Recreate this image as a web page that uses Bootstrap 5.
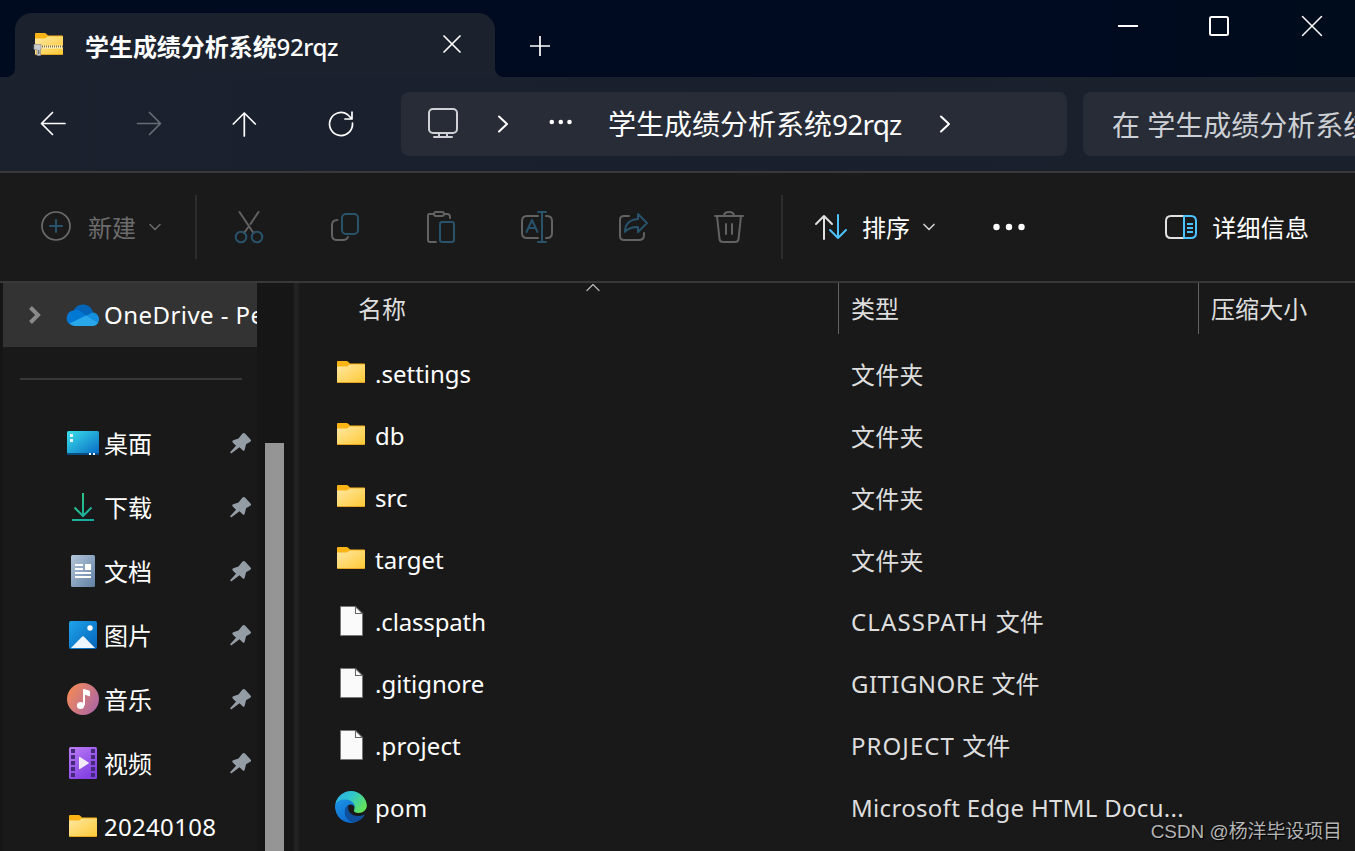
<!DOCTYPE html>
<html lang="zh-CN" data-bs-theme="dark">
<head>
<meta charset="utf-8">
<title>学生成绩分析系统92rqz</title>
<link href="https://cdn.jsdelivr.net/npm/bootstrap@5.3.0/dist/css/bootstrap.min.css" rel="stylesheet">
<style>
  body { width:1355px; height:851px; overflow:hidden; background:#191919; color:#fff;
    font-family:"Noto Sans","Noto Sans CJK SC",sans-serif; font-size:24px; line-height:32px; }
  svg { display:block; flex:none; overflow:visible; }
  .ln { fill:none; stroke:currentColor; stroke-width:2; stroke-linecap:round; stroke-linejoin:round; }
  .titlebar { height:77px; background:linear-gradient(90deg,#000b20,#000a20 80%,#000c1b); }
  .tab-active { width:480px; height:64px; margin:13px 0 0 15px; background:#1b212d; border-radius:17px 17px 0 0; padding-left:19px; }
  .tab-active::before, .tab-active::after { content:""; position:absolute; bottom:0; width:8px; height:8px; }
  .tab-active::before { left:-8px; background:radial-gradient(circle at 0 0,transparent 7.5px,#1b212d 8px); }
  .tab-active::after { right:-8px; background:radial-gradient(circle at 100% 0,transparent 7.5px,#1b212d 8px); }
  .tab-title { margin:3px 0 0 21px; font-weight:700; width:254px; letter-spacing:-.05px; }
  .tab-title span { font-weight:500; letter-spacing:-.4px; }
  .navrow { height:96px; background:linear-gradient(90deg,#1b212d,#191f2c 60%,#1b212c); border-bottom:2px solid #383838; padding-left:5px; }
  .nav-cell { width:96px; height:94px; }
  .field { height:64px; background:#272c37; border-radius:8px; font-size:28px; }
  .address { width:666px; margin-left:12px; }
  .searchbox { width:272px; margin-left:16px; padding-left:29px; color:#cdd0d4; border-radius:8px 0 0 8px; overflow:hidden; }
  .toolrow { height:110px; border-bottom:2px solid #383838; background:#1a1a1a; }
  .toolrow span { padding-top:2px; letter-spacing:.1px; }
  .tool { width:96px; height:108px; color:#626262; }
  .vline { width:2px; height:64px; background:#2d2d2d; }
  .blue { color:#28536a; }
  .sky { color:#4cc2ff; }
  .content-area { height:568px; }
  .sidepane { width:257px; border-left:3px solid #151515; }
  .side-item { height:64px; }
  .side-item .ico { width:32px; margin-left:64px; }
  .side-item .txt { margin-left:5px; width:126px; white-space:nowrap; overflow:hidden; line-height:34px; padding-top:1px; letter-spacing:.1px; }
  .side-item .latin { padding-top:0; }
  .side-sep { height:2px; width:222px; margin:31px 0 31px 17px; background:#383838; }
  .gutter { width:8px; background:#161616; }
  .track { width:28px; background:#161616; }
  .thumb { width:19px; height:408px; margin-top:160px; background:#959595; }
  .split { width:6px; background:#242424; border-left:2px solid #1d1d1d; border-right:2px solid #202020; }
  .colhead { height:60px; color:#dedede; }
  .colhead > div { height:51px; padding-top:10px; letter-spacing:.1px; }
  .c-name { width:539px; }
  .c-type { width:360px; }
  .c-div { border-left:1px solid #636363; padding-left:12px; }
  .file-row { height:62px; }
  .file-row .c-name { padding-left:35px; }
  .file-row .c-type { padding-left:13px; color:#dedede; white-space:nowrap; }
  .file-row .kind-dir { padding-top:2px; letter-spacing:.2px; }
  .file-row .fname { margin-left:9px; }
  .wmark { position:absolute; right:13px; bottom:5px; font:18.9px/28px "Liberation Sans","Noto Sans CJK SC",sans-serif; color:#b4b4b4; text-shadow:1px 1px 1px #000; }
</style>
</head>
<body class="position-relative">
<svg width="0" height="0" class="position-absolute">
  <defs>
    <linearGradient id="gFold" x1="0" y1="0" x2="1" y2="1"><stop offset="0" stop-color="#ffe8a3"/><stop offset="1" stop-color="#ffc935"/></linearGradient>
    <linearGradient id="gDesk" x1="0" y1="0" x2="1" y2="1"><stop offset="0" stop-color="#3ae0ea"/><stop offset="1" stop-color="#0868c4"/></linearGradient>
    <linearGradient id="gDown" gradientUnits="userSpaceOnUse" x1="5" y1="2" x2="27" y2="30"><stop offset="0" stop-color="#36c97c"/><stop offset="1" stop-color="#12a8a8"/></linearGradient>
    <linearGradient id="gDoc" x1="0" y1="0" x2="1" y2="1"><stop offset="0" stop-color="#b4c7da"/><stop offset="1" stop-color="#6080a4"/></linearGradient>
    <linearGradient id="gPic" x1="0" y1="0" x2="1" y2="1"><stop offset="0" stop-color="#1fa4ea"/><stop offset="1" stop-color="#0562b8"/></linearGradient>
    <linearGradient id="gMus" x1="0" y1=".2" x2="1" y2=".8"><stop offset="0" stop-color="#f58a56"/><stop offset="1" stop-color="#a966a8"/></linearGradient>
    <linearGradient id="gVid" x1="0" y1="0" x2=".6" y2="1"><stop offset="0" stop-color="#bb7df5"/><stop offset="1" stop-color="#8340e4"/></linearGradient>
    <linearGradient id="gEdgeTop" x1="0" y1="0" x2="1" y2=".6"><stop offset="0" stop-color="#2ba8f0"/><stop offset=".5" stop-color="#2fc5cf"/><stop offset="1" stop-color="#62e35c"/></linearGradient>
    <linearGradient id="gEdgeMid" x1="0" y1="0" x2=".5" y2="1"><stop offset="0" stop-color="#1c93e4"/><stop offset="1" stop-color="#0c6dd0"/></linearGradient>
    <symbol id="folder" viewBox="0 0 28 22"><path d="M0 1q0-1 1-1h8.500q1 0 1.700.8L13 2.500h14q1 0 1 1V12H0z" fill="#fbb416"/><path d="M0 5.500h9.500q1 0 1.700-.7L12.600 3.500H28V21q0 .8-1 .8H1q-1 0-1-.8z" fill="url(#gFold)"/><path d="M.3 21.500h27.400" stroke="#e9a51c" stroke-width=".9"/></symbol>
    <symbol id="paper" viewBox="0 0 24 30"><path d="M.5.500h15l7 7v22H.5z" fill="#fafafa" stroke="#777"/><path d="M15.500 .5v7h7z" fill="#fff" stroke="#666" stroke-width="1.100"/></symbol>
    <symbol id="pin" viewBox="0 0 22 22"><path d="M12.500 1Q13.500 0 15 1l5.500 6q1.200 1.300-.2 2.300l-4.300 2.400-1.200 5.400q-.6 2-2.200.7l-3.100-3.100L1.500 20.700q-1.500.3-1.200-1.200L6 13.200l-3.300-3.300q-1.200-1.500.5-2.200L8.500 6z" fill="#949da5"/></symbol>
  </defs>
</svg>

<header class="titlebar d-flex">
  <div class="tab-active position-relative d-flex align-items-center">
    <svg width="30" height="24"><g transform="translate(1,0)"><use href="#folder" width="28" height="22"/></g><path d="M6 14H29" stroke="#fff2c0" stroke-width="3"/><path d="M6 13.500H29" stroke="#867044" stroke-width="2" stroke-dasharray="1 1"/><path d="M0 11.500h7v5H6.500v6h-3.500v-6H0z" fill="#c9cccf" stroke="#8d8d8d" stroke-width=".7"/><path d="M4.800 17v4" stroke="#555" stroke-width="1"/></svg>
    <div class="tab-title text-nowrap">学生成绩分析系统<span>92rqz</span></div>
    <svg class="ln" width="16" height="16" style="margin-left:105px;margin-top:-2px"><path d="M0 0 16 16M16 0 0 16" stroke-width="1.700"/></svg>
  </div>
  <svg class="ln" width="20" height="20" style="margin:36px 0 0 35px"><path d="M0 10H20M10 0V20" stroke-width="1.700" stroke-linecap="butt"/></svg>
  <div class="d-flex ms-auto" style="margin-top:16px;margin-right:33px">
    <svg class="ln" width="20" height="20"><path d="M0 10H20" stroke-linecap="butt"/></svg>
    <svg class="ln" width="20" height="20" style="margin:0 73px 0 71px"><rect x="1" y="1" width="18" height="18" rx="1.500"/></svg>
    <svg class="ln" width="20" height="20"><path d="M.5.500 19.500 19.500M19.500.5.500 19.500" stroke-width="1.500"/></svg>
  </div>
</header>

<nav class="navrow d-flex align-items-center">
  <div class="nav-cell flex-shrink-0 d-flex align-items-center justify-content-center"><svg class="ln" width="24" height="24"><path d="M24 11.500H.5M11.500 .5.500 11.500 11.500 22.500" stroke-width="1.700"/></svg></div>
  <div class="nav-cell flex-shrink-0 d-flex align-items-center justify-content-center" style="color:#686c75"><svg class="ln" width="24" height="24"><path d="M.5 11.500H23.500M12.500 .5 23.500 11.500 12.500 22.500" stroke-width="1.700"/></svg></div>
  <div class="nav-cell flex-shrink-0 d-flex align-items-center justify-content-center"><svg class="ln" width="24" height="24"><path d="M11.300 24V1M.3 12 11.300 1 22.300 12" stroke-width="1.700"/></svg></div>
  <div class="nav-cell flex-shrink-0 d-flex align-items-center justify-content-center"><svg class="ln" width="24" height="24"><path d="M23.500 11A11.500 11.500 0 1 1 18.500 2.500L22.500 6.500M23 0V7H16" stroke-width="1.700"/></svg></div>
  <div class="field address flex-shrink-0 d-flex align-items-center">
    <svg class="ln" width="30" height="30" style="margin-left:27px;margin-top:-2px;color:#cfd1d4"><rect x="1" y="1" width="28" height="24" rx="4"/><path d="M11 25v3M19 25v3M6 29H24"/></svg>
    <svg class="ln" width="8" height="16" style="margin-left:41px"><path d="M0 .5 8 8 0 15.500"/></svg>
    <svg width="24" height="6" style="margin:-4px 0 0 42px" fill="#fff"><circle cx="2.800" cy="3" r="2.300"/><circle cx="11.800" cy="3" r="2.300"/><circle cx="20.500" cy="3" r="2.300"/></svg>
    <div class="text-nowrap" style="margin-left:35px;width:294px">学生成绩分析系统<span style="letter-spacing:-.8px">92rqz</span></div>
    <svg class="ln" width="8" height="16" style="margin-left:39px"><path d="M0 .5 8 8 0 15.500"/></svg>
  </div>
  <div class="field searchbox flex-shrink-0 d-flex align-items-center text-nowrap"><span style="padding-top:2px">在 学生成绩分析系统</span></div>
</nav>

<div class="toolrow d-flex align-items-center">
  <div class="d-flex align-items-center" style="width:195px;padding-left:41px;color:#6c6c6c">
    <svg class="ln" width="30" height="30" style="margin-top:-2px"><circle cx="15" cy="15" r="14" stroke-width="1.700"/><path class="blue" stroke="currentColor" d="M15 9V21M9 15H21"/></svg>
    <span style="margin-left:17px">新建</span>
    <svg class="ln" width="10" height="6" style="margin-left:14px"><path d="M0 .5 5 5.500 10 .5" stroke-width="1.500"/></svg>
  </div>
  <div class="vline"></div>
  <div class="d-flex" style="margin-left:4px">
    <div class="tool d-flex align-items-center justify-content-center"><svg class="ln" width="32" height="32" stroke-width="1.700"><path d="M6.500 1 20.500 22M25.500 1 17.500 13M15 16.500 11 22"/><g class="blue" stroke="currentColor"><circle cx="8" cy="26" r="5.300"/><circle cx="24" cy="26" r="5.300"/></g></svg></div>
    <div class="tool d-flex align-items-center justify-content-center"><svg class="ln" width="32" height="32"><path d="M8.500 9Q3 9 3 14V24Q3 29 8 29H14Q18 29 19 26"/><rect class="blue" stroke="currentColor" x="13" y="3" width="16" height="20" rx="4"/></svg></div>
    <div class="tool d-flex align-items-center justify-content-center"><svg class="ln" width="32" height="32"><path d="M8 3H4Q3 3 3 5V29Q3 31 5 31H11M19 3H22Q25 3 25 6V7"/><rect x="9" y="1" width="10" height="4" rx="2"/><rect class="blue" stroke="currentColor" x="15" y="11" width="14" height="20" rx="2"/></svg></div>
    <div class="tool d-flex align-items-center justify-content-center"><svg class="ln" width="32" height="32"><path d="M17 5H6Q1 5 1 10V22Q1 27 6 27H17M25 5H26Q31 5 31 10V22Q31 27 26 27H25"/><g class="blue" stroke="currentColor"><path d="M17 1H25M17 31H25M21 1V31M5.500 21 11 9 16.500 21M7.500 17H14.500"/></g></svg></div>
    <div class="tool d-flex align-items-center justify-content-center"><svg class="ln" width="32" height="32"><path d="M12 5H7Q3 5 3 9V25Q3 29 7 29H22Q27 29 27 24V22"/><path class="blue" stroke="currentColor" d="M21 3 30 12 21 21V16Q12 16 8 21Q8 9 21 8Z"/></svg></div>
    <div class="tool d-flex align-items-center justify-content-center"><svg class="ln" width="32" height="32"><path d="M2 5H30M11 5Q11 1 16 1T21 5M4 5 6.500 28Q7 31 10 31H22Q25 31 25.500 28L28 5M13 13V23M19 13V23"/></svg></div>
  </div>
  <div class="vline" style="margin-left:4px"></div>
  <svg class="ln" width="32" height="24" style="margin-left:32px"><path d="M9 24V1M1 9 9 1 17 9" stroke="#e1e1e1"/><path class="sky" stroke="currentColor" d="M23 0V23M15 15 23 23 31 15"/></svg>
  <span style="margin-left:15px">排序</span>
  <svg class="ln" width="10" height="6" style="margin-left:14px;color:#ccc"><path d="M0 .5 5 5.500 10 .5" stroke-width="1.700"/></svg>
  <svg width="32" height="8" style="margin-left:59px" fill="#fff"><circle cx="3.500" cy="4" r="3.200"/><circle cx="16" cy="4" r="3.200"/><circle cx="28.500" cy="4" r="3.200"/></svg>
  <svg class="ln" width="32" height="24" style="margin-left:140px"><path d="M19 1H6Q1 1 1 6V18Q1 23 6 23H19" stroke="#e1e1e1"/><path class="sky" stroke="currentColor" d="M19 1H26Q31 1 31 6V18Q31 23 26 23H19ZM22 9H28M22 13H28M22 17H28" stroke-linecap="butt"/></svg>
  <span style="margin-left:15px;letter-spacing:.25px">详细信息</span>
</div>

<main class="content-area d-flex">
  <aside class="sidepane">
    <div class="side-item d-flex align-items-center" style="background:#333">
      <svg width="12" height="18" style="margin-left:26px" fill="none" stroke="#8a8a8a" stroke-width="4"><path d="M1.500 1.500 9 9 1.500 16.500"/></svg>
      <svg width="32" height="21" style="margin-left:26px"><path d="M6.500 5.500A10.300 10.300 0 0 1 26 8L19 13z" fill="#0364b8"/><path d="M6.500 5.400A7 7 0 0 1 12 5.500L20 11 3 19.500A7.800 7.800 0 0 1 6.500 5.400" fill="#0078d4"/><path d="M19 10.800 25.500 7.600A6.700 6.700 0 0 1 30.500 18.500L20 14z" fill="#1490df"/><path d="M2.500 18.600 19 10.600 31 18Q29 21 25.500 21H7.500Q4.500 21 2.500 18.600" fill="#28a8ea"/></svg>
      <div class="txt latin" style="width:153px;letter-spacing:.45px">OneDrive - Pe</div>
    </div>
    <div class="side-sep"></div>
    <div class="side-item d-flex align-items-center"><div class="ico"><svg width="32" height="24"><rect width="32" height="24" rx="1.500" fill="url(#gDesk)"/><path d="M0 22H32V23.500Q32 24 31 24H1Q0 24 0 23.500z" fill="#0a4d80"/><path d="M3 3h3v3H3zM3 8h3v3H3zM22 22h2v2h-2zM26 22h2v2h-2z" fill="#e8f4ff"/></svg></div><div class="txt">桌面</div><svg width="22" height="22"><use href="#pin" y=".5" width="22" height="22"/></svg></div>
    <div class="side-item d-flex align-items-center"><div class="ico"><svg width="32" height="32"><path d="M16 2V25M7.500 16.500 16 25 24.500 16.500" fill="none" stroke="url(#gDown)" stroke-width="2"/><path d="M5 28H27V30H5z" fill="url(#gDown)"/></svg></div><div class="txt">下载</div><svg width="22" height="22"><use href="#pin" y=".5" width="22" height="22"/></svg></div>
    <div class="side-item d-flex align-items-center"><div class="ico"><svg width="32" height="32"><rect x="4" width="24" height="32" rx="1.500" fill="url(#gDoc)"/><path d="M8 9h8v2H8zM8 13h8v2H8zM18 9h6v6h-6zM8 17h16v2H8zM8 21h16v2H8z" fill="#fff"/></svg></div><div class="txt">文档</div><svg width="22" height="22"><use href="#pin" y=".5" width="22" height="22"/></svg></div>
    <div class="side-item d-flex align-items-center"><div class="ico"><svg width="32" height="28"><rect x="2" width="28" height="28" rx="2" fill="url(#gPic)"/><path d="M4 27 15 15.700q1-1 2 0L28 27z" fill="#eef6fd"/><circle cx="23" cy="7" r="2.700" fill="#fff"/></svg></div><div class="txt">图片</div><svg width="22" height="22"><use href="#pin" y=".5" width="22" height="22"/></svg></div>
    <div class="side-item d-flex align-items-center"><div class="ico"><svg width="32" height="32"><circle cx="16" cy="16" r="16" fill="url(#gMus)"/><circle cx="13.500" cy="22.500" r="3.600" fill="#fff"/><path d="M16 22V6.800q0-1 1-.8l5 1.600q1 .3 1 1.400v4.500L18 11.800V22.500z" fill="#fff"/></svg></div><div class="txt">音乐</div><svg width="22" height="22"><use href="#pin" y=".5" width="22" height="22"/></svg></div>
    <div class="side-item d-flex align-items-center"><div class="ico"><svg width="32" height="32"><rect x="2" width="28" height="32" rx="1.500" fill="url(#gVid)"/><path d="M6 2V31M26 2V31" stroke="#442a78" stroke-width="4" stroke-dasharray="4 2"/><path d="M12 10.500q0-1 1-.5l8.500 5.500q.8.500 0 1L13 22q-1 .5-1-.5z" fill="#f2ecfa"/></svg></div><div class="txt">视频</div><svg width="22" height="22"><use href="#pin" y=".5" width="22" height="22"/></svg></div>
    <div class="side-item d-flex align-items-center"><div class="ico"><svg width="32" height="24"><use href="#folder" x="2" width="28" height="22"/></svg></div><div class="txt latin" style="letter-spacing:.3px">20240108</div></div>
  </aside>
  <div class="gutter"></div>
  <div class="track"><div class="thumb"></div></div>
  <div class="split"></div>

  <section class="flex-grow-1">
    <div class="colhead d-flex position-relative">
      <div class="c-name" style="padding-left:59px">名称</div>
      <div class="c-type c-div">类型</div>
      <div class="c-div">压缩大小</div>
      <svg class="ln position-absolute" width="12" height="7" style="left:288px;top:1px;color:#b5b5b5"><path d="M0 6.500 6 .5 12 6.500" stroke-width="1.200"/></svg>
    </div>
    <div class="file-row d-flex align-items-center"><div class="c-name d-flex align-items-center"><svg width="32" height="32"><use href="#folder" x="3" y="3" width="28" height="22"/></svg><span class="fname">.settings</span></div><div class="c-type kind-dir">文件夹</div></div>
    <div class="file-row d-flex align-items-center"><div class="c-name d-flex align-items-center"><svg width="32" height="32"><use href="#folder" x="3" y="3" width="28" height="22"/></svg><span class="fname">db</span></div><div class="c-type kind-dir">文件夹</div></div>
    <div class="file-row d-flex align-items-center"><div class="c-name d-flex align-items-center"><svg width="32" height="32"><use href="#folder" x="3" y="3" width="28" height="22"/></svg><span class="fname">src</span></div><div class="c-type kind-dir">文件夹</div></div>
    <div class="file-row d-flex align-items-center"><div class="c-name d-flex align-items-center"><svg width="32" height="32"><use href="#folder" x="3" y="3" width="28" height="22"/></svg><span class="fname">target</span></div><div class="c-type kind-dir">文件夹</div></div>
    <div class="file-row d-flex align-items-center"><div class="c-name d-flex align-items-center"><svg width="32" height="32"><use href="#paper" x="6" y="0" width="24" height="30"/></svg><span class="fname" style="letter-spacing:-.15px">.classpath</span></div><div class="c-type"><span style="letter-spacing:1.1px">CLASSPATH </span>文件</div></div>
    <div class="file-row d-flex align-items-center"><div class="c-name d-flex align-items-center"><svg width="32" height="32"><use href="#paper" x="6" y="0" width="24" height="30"/></svg><span class="fname">.gitignore</span></div><div class="c-type"><span style="letter-spacing:.45px">GITIGNORE </span>文件</div></div>
    <div class="file-row d-flex align-items-center"><div class="c-name d-flex align-items-center"><svg width="32" height="32"><use href="#paper" x="6" y="0" width="24" height="30"/></svg><span class="fname" style="letter-spacing:.1px">.project</span></div><div class="c-type"><span style="letter-spacing:1.05px">PROJECT </span>文件</div></div>
    <div class="file-row d-flex align-items-center"><div class="c-name d-flex align-items-center"><svg width="32" height="32" style="overflow:hidden;border-radius:50%;margin:-2px -1px 0 1px"><path d="M0 14A16 16 0 0 1 32 13.500C32 19 28 22 23.500 22 20 22 18.500 20.500 19 19 20.500 16 19 12 14 10 8 8 3 10 0 14" fill="url(#gEdgeTop)"/><path d="M0 14C2 9.500 7 8 11 8.500 17 9 20 13 19.800 16.500 19 14 16 12.500 13.500 14 8 17.500 9 27 19 31.700 9 33.500-1 26 0 14" fill="url(#gEdgeMid)"/><path d="M13.500 14C8 17.500 8 27.500 18 32 23 31.500 27.500 29 29.800 24.500 30 23.800 29.300 23.500 28.500 24 20 27.500 11 22 13.500 14" fill="#104f9c"/></svg><span class="fname" style="letter-spacing:.2px">pom</span></div><div class="c-type" style="letter-spacing:.31px">Microsoft Edge HTML Docu...</div></div>
  </section>
</main>
<div class="wmark">CSDN @杨洋毕设项目</div>
<script src="https://cdn.jsdelivr.net/npm/bootstrap@5.3.0/dist/js/bootstrap.bundle.min.js"></script>
</body>
</html>
